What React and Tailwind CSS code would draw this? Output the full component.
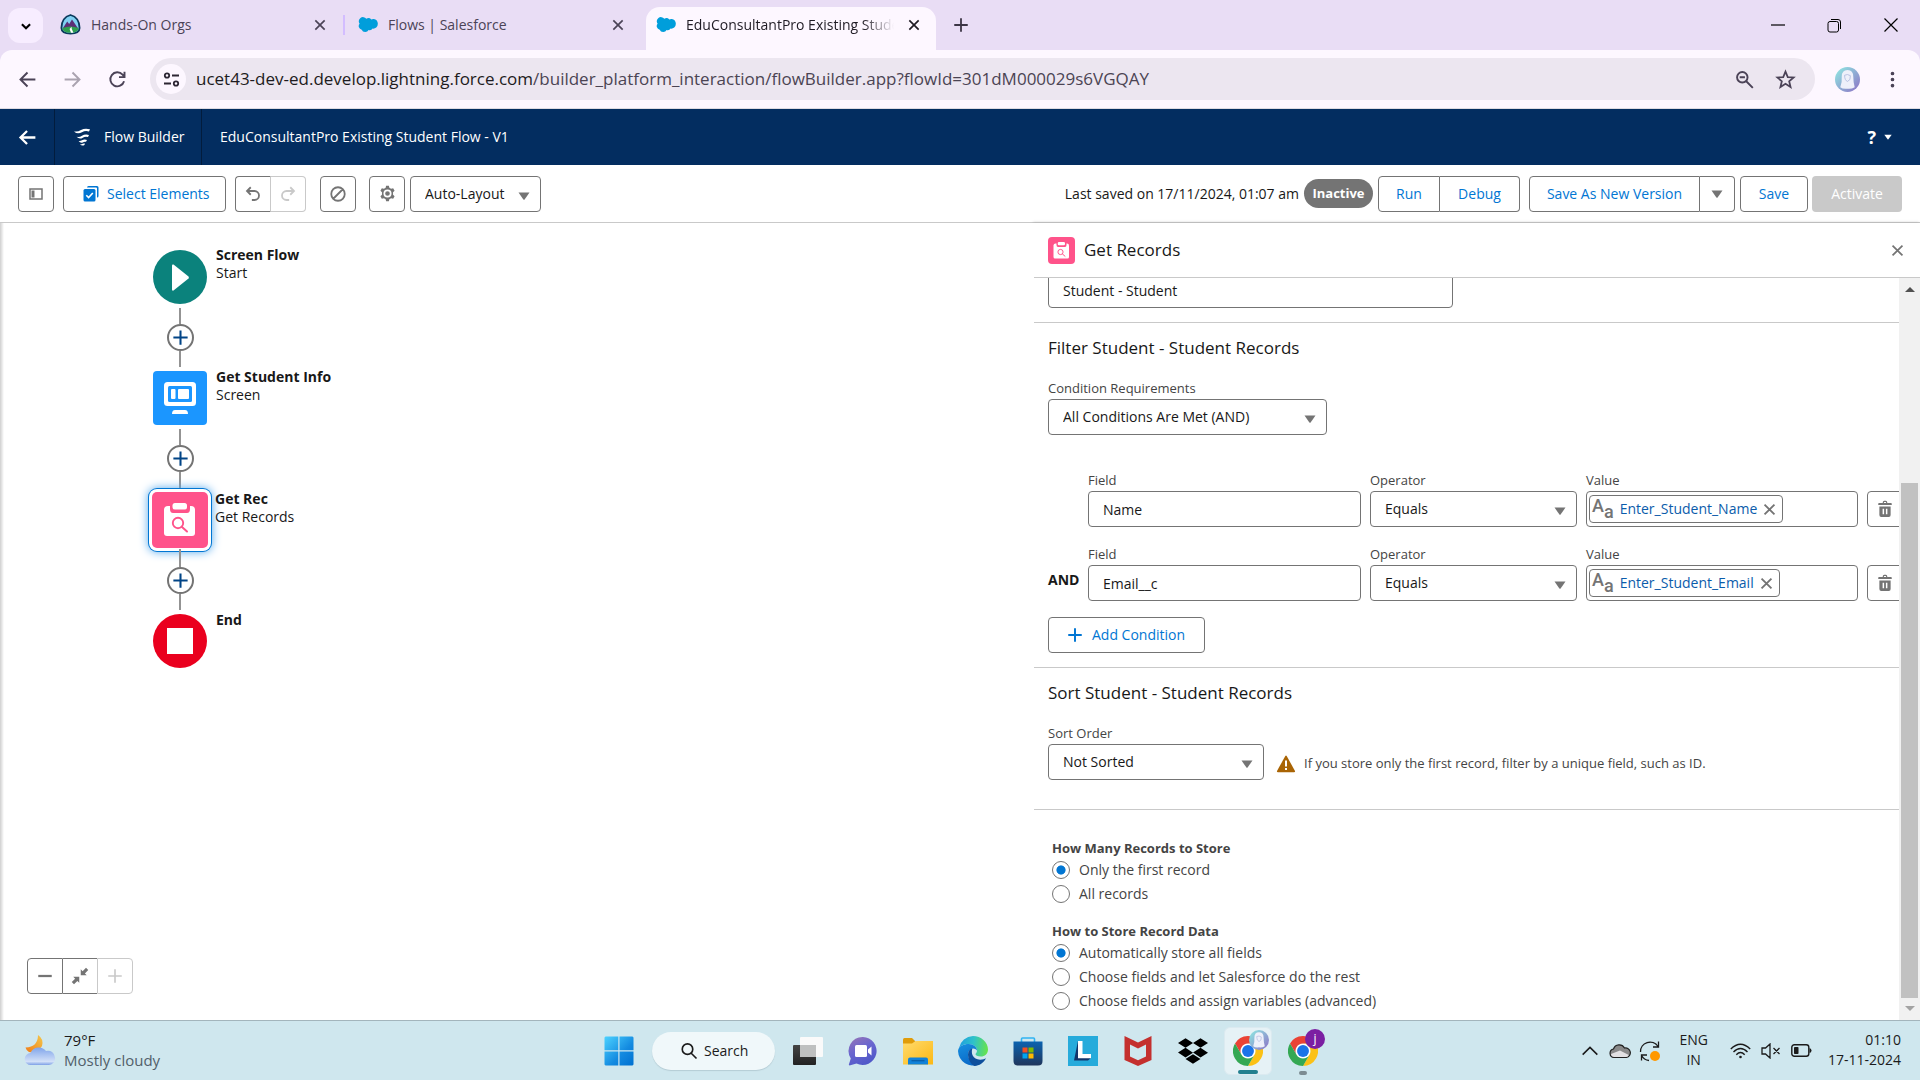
import React from "react";
import { FaDropbox } from "react-icons/fa";

const font = "font-['Open_Sans','Noto_Sans',sans-serif]";

/* ---------- small drawings ---------- */

const Line = ({ d, size = 20, w = 2, className = "", vb = 24 }) => (
  <svg width={size} height={size} viewBox={`0 0 ${vb} ${vb}`} fill="none" stroke="currentColor" strokeWidth={w} className={`shrink-0 ${className}`} aria-hidden="true">
    <path d={d} />
  </svg>
);

const Solid = ({ d, size = 20, className = "", vb = 24 }) => (
  <svg width={size} height={size} viewBox={`0 0 ${vb} ${vb}`} fill="currentColor" className={`shrink-0 ${className}`} aria-hidden="true">
    <path fillRule="evenodd" d={d} />
  </svg>
);

const X = "M5 5 L19 19 M19 5 L5 19";
const PLUS = "M12 3 V21 M3 12 H21";
const Caret = ({ className = "", size = 12 }) => <Solid vb={12} size={size} d="M0.5 2.5 H11.5 L6.6 9.4 Q6 10.1 5.4 9.4 Z" className={className} />;

const Cloud = () => (
  <svg width="20" height="16" viewBox="0 0 20 16" className="shrink-0" aria-hidden="true">
    <path fill="#009edb" d="M8.3 1.8 A3.7 3.7 0 0 1 13.3 2.4 A4.6 4.6 0 0 1 19.8 7 A4.6 4.6 0 0 1 14.6 11.6 A3.4 3.4 0 0 1 10.6 13 A3.8 3.8 0 0 1 3.7 12.7 A3.6 3.6 0 0 1 1.6 6.8 A4.1 4.1 0 0 1 8.3 1.8 Z" />
  </svg>
);

const Trailhead = () => (
  <svg width="21" height="21" viewBox="0 0 21 21" className="shrink-0" aria-hidden="true">
    <path d="M10.5 1 C16 2.5 19.5 7 19.6 14 Q19.5 19.5 10.5 19.7 Q1.5 19.5 1.4 14 C1.5 7 5 2.5 10.5 1 Z" fill="#7fd0f2" stroke="#0b3a5c" strokeWidth="1.8" />
    <path d="M3 14 L7.2 7.5 L9.2 10 L12 5.5 L17.8 14 Z" fill="#5b2f77" />
    <path d="M2.4 14 Q10.5 11 18.6 14 Q18.5 18.6 10.5 18.8 Q2.5 18.6 2.4 14 Z" fill="#2e9e4f" />
    <path d="M11.5 12.8 L9.6 15 L11 18.7 H13.4 L11.8 15 Z" fill="#fff" />
  </svg>
);

const FlowMark = () => (
  <svg width="18" height="18" viewBox="0 0 18 18" fill="#fff" className="shrink-0" aria-hidden="true">
    <path d="M1 3.4 Q4.5 4.2 8 2 Q12 -0.2 17 1.3 L16 3.4 Q12 2.4 9 4.2 Q4.5 6.8 1 3.4 Z" />
    <path d="M3.6 8.8 Q6.5 9.4 9 7.7 Q12 5.8 16 6.9 L15 9 Q12 8.200 9.800 9.700 Q6.400 11.900 3.6 8.8 Z" />
    <path d="M5.6 13 Q7.4 13.4 9 12.300 Q11 11.100 14 11.900 L13 13.800 Q11.200 13.400 9.800 14.400 Q7.600 15.700 5.6 13 Z" />
    <path d="M7 16.200 Q8.600 16.400 9.600 15.700 Q10.600 15.200 12 15.500 L11.400 17 Q9 18.400 7 16.200 Z" />
  </svg>
);

const Clipboard = ({ size }) => (
  <svg width={size} height={size} viewBox="0 0 54 54" className="block" aria-hidden="true">
    <path d="M15 13 H38 Q42 13 42 17 V40 Q42 43 39 43 H14 Q11 43 11 40 V17 Q11 13 15 13 Z" fill="#fff" />
    <path d="M17 10 H37 V16 Q37 20 34 20 H20 Q17 20 17 16 Z" fill="#ff538a" />
    <rect x="19.5" y="10" width="14.500" height="6.500" rx="2.500" fill="#fff" />
    <circle cx="25" cy="30" r="5.200" fill="none" stroke="#ff538a" strokeWidth="1.900" />
    <path d="M29 34 L34 38.500" stroke="#ff538a" strokeWidth="2" strokeLinecap="round" />
  </svg>
);

const Monitor = () => (
  <svg width="54" height="54" viewBox="0 0 54 54" className="block" aria-hidden="true">
    <rect x="11" y="11" width="32" height="24" rx="3.500" fill="#fff" />
    <rect x="15" y="15" width="24" height="16" rx="1.500" fill="#1b96ff" />
    <rect x="18" y="18" width="4.500" height="10" rx="1" fill="#fff" />
    <rect x="25" y="18" width="11" height="10" rx="1" fill="#fff" />
    <path d="M19 43 Q19 39 22 39 H32 Q35 39 35 43 Z" fill="#fff" />
  </svg>
);

const Chrome = () => (
  <svg width="30" height="30" viewBox="0 0 48 48" className="block" aria-hidden="true">
    <circle cx="24" cy="24" r="12" fill="#fff" />
    <path fill="#ea4335" d="M24,12H44.78a23.99,23.99,0,0,0-41.56,0L13.61,30A11.99,11.99,0,0,1,24,12Z" />
    <path fill="#fbc116" d="M34.39,30,24,48A23.99,23.99,0,0,0,44.78,12H24A11.99,11.99,0,0,1,34.39,30Z" />
    <path fill="#34a853" d="M13.61,30,3.22,12A23.99,23.99,0,0,0,24,48L34.39,30a11.99,11.99,0,0,1-20.78,0Z" />
    <circle cx="24" cy="24" r="9.500" fill="#1a73e8" />
  </svg>
);

const Avatar = ({ size }) => (
  <svg width={size} height={size} viewBox="0 0 26 26" className="block shrink-0" aria-hidden="true">
    <defs>
      <linearGradient id="av" x1="0" y1="0" x2="1" y2="1">
        <stop offset="0.1" stopColor="#8fe0e0" />
        <stop offset="0.9" stopColor="#8d7cc8" />
      </linearGradient>
    </defs>
    <circle cx="13" cy="13" r="13" fill="url(#av)" />
    <path d="M13 3 Q19 3 19 10 Q19 16 20.500 21 Q17 23 13 22.500 Q8 23 5.500 21 Q7.500 16 7 10 Q7 3 13 3 Z" fill="#eef0fa" />
    <path d="M10 8.500 Q13 7 16 9 Q16.500 14 13 15 Q10 14 10 8.500 Z" fill="none" stroke="#a9b4dc" strokeWidth="0.800" />
  </svg>
);

const Edge = () => (
  <svg width="30" height="30" viewBox="0 0 30 30" className="block" aria-hidden="true">
    <defs>
      <linearGradient id="e1" x1="0" y1="0.3" x2="1" y2="0.4">
        <stop offset="0" stopColor="#1e9fe0" />
        <stop offset="0.5" stopColor="#2fc2c9" />
        <stop offset="1" stopColor="#66e34c" />
      </linearGradient>
      <linearGradient id="e2" x1="0" y1="0" x2="0.4" y2="1">
        <stop offset="0" stopColor="#1790e0" />
        <stop offset="1" stopColor="#0a6ac8" />
      </linearGradient>
    </defs>
    <path d="M1 12 A15 15 0 0 1 15 0 C23 0 30 6 30 13.500 C30 18 26.500 20.500 23 20.500 C19.500 20.500 17.500 19.500 17.500 18.300 C17.500 17.300 19 17 19 14.600 C19 11 15.500 8 10.800 8 C6.500 8 3 9.500 1 12 Z" fill="url(#e1)" />
    <path d="M0 15 C0.500 10 5.500 8 10.800 8 C15.500 8 19 11 19 14.600 C16.500 10.500 10 12.500 10 18.500 C10 24.500 16 29 21 28.200 A15 15 0 0 1 0 15 Z" fill="url(#e2)" />
    <path d="M10 18.500 C10 15 12 13 14.500 12.300 C12.500 17 15 24 22.500 23.700 C25 23.600 26.500 22.700 28 22.200 C26 26.500 21 30 16.500 29.900 C13 28.500 10 23.500 10 18.500 Z" fill="#0e4f9c" />
  </svg>
);

const WinLogo = () => (
  <svg width="30" height="30" viewBox="0 0 30 30" className="block" aria-hidden="true">
    <defs>
      <linearGradient id="wl" x1="0" y1="0" x2="1" y2="1">
        <stop offset="0" stopColor="#4cd2ff" />
        <stop offset="0.6" stopColor="#138ae0" />
        <stop offset="1" stopColor="#0070d0" />
      </linearGradient>
    </defs>
    <path fill="url(#wl)" d="M1.500 0.500 H14.300 V14.300 H0.500 V1.500 Z M15.500 0.500 H28.500 L29.500 1.500 V14.300 H15.500 Z M0.500 15.500 H14.300 V29.500 H1.500 L0.500 28.500 Z M15.500 15.500 H29.500 V28.500 L28.500 29.500 H15.500 Z" />
  </svg>
);

const TaskView = () => (
  <svg width="30" height="30" viewBox="0 0 30 30" className="block" aria-hidden="true">
    <defs>
      <linearGradient id="tv" x1="0" y1="0" x2="0" y2="1">
        <stop offset="0" stopColor="#444" />
        <stop offset="1" stopColor="#222" />
      </linearGradient>
    </defs>
    <rect x="0" y="9" width="23" height="20" rx="1" fill="url(#tv)" />
    <rect x="7" y="1" width="23" height="20" rx="1" fill="#fafafa" />
    <rect x="7" y="9" width="16" height="12" fill="#bfc0c0" />
  </svg>
);

const Chat = () => (
  <svg width="30" height="30" viewBox="0 0 30 30" className="block" aria-hidden="true">
    <defs>
      <linearGradient id="ch" x1="0" y1="0" x2="0.5" y2="1">
        <stop offset="0" stopColor="#9a76b4" />
        <stop offset="0.5" stopColor="#6a66cf" />
        <stop offset="1" stopColor="#5059c9" />
      </linearGradient>
    </defs>
    <path d="M15 1 A14 14 0 1 1 8.500 27.600 L1.500 29.500 Q0.500 29 1 28 L2.800 22.500 A14 14 0 0 1 15 1 Z" fill="url(#ch)" />
    <rect x="7" y="9" width="12" height="12" rx="1.500" fill="#fff" />
    <path d="M20 13.500 L23.500 10.500 V19.500 L20 16.500 Z" fill="#fff" />
  </svg>
);

const Folder = () => (
  <svg width="30" height="30" viewBox="0 0 30 30" className="block" aria-hidden="true">
    <defs>
      <linearGradient id="fo" x1="0" y1="0" x2="1" y2="1">
        <stop offset="0" stopColor="#ffdb6e" />
        <stop offset="1" stopColor="#fcb813" />
      </linearGradient>
    </defs>
    <path d="M0 3.500 Q0 2 1.500 2 H9 L12 5 V12 H0 Z" fill="#e09c0a" />
    <path d="M0 7.500 H9 L12.500 5 H30 V28.500 H0 Z" fill="url(#fo)" />
    <path d="M5 28.500 V23.500 Q5 21.500 7 21.500 H23 Q25 21.500 25 23.500 V28.500 Z" fill="#1182d8" />
    <path d="M8.500 24.700 H21.500" stroke="#0b5ea8" strokeWidth="1.300" />
  </svg>
);

const Store = () => (
  <svg width="30" height="30" viewBox="0 0 30 30" className="block" aria-hidden="true">
    <defs>
      <linearGradient id="st" x1="0" y1="0" x2="0" y2="1">
        <stop offset="0" stopColor="#0b63b0" />
        <stop offset="1" stopColor="#20365c" />
      </linearGradient>
    </defs>
    <path d="M8.500 7 V3 Q8.500 2 9.500 2 H20.500 Q21.500 2 21.500 3 V7" fill="none" stroke="#30b4f2" strokeWidth="1.600" />
    <path d="M0.500 5.500 H29.500 V25 Q29.500 29.500 25 29.500 H5 Q0.500 29.500 0.500 25 Z" fill="url(#st)" />
    <rect x="9.500" y="11.500" width="5" height="5" fill="#f25022" />
    <rect x="15.500" y="11.500" width="5" height="5" fill="#7fba00" />
    <rect x="9.500" y="17.500" width="5" height="5" fill="#00a4ef" />
    <rect x="15.500" y="17.500" width="5" height="5" fill="#ffb900" />
  </svg>
);

const BlueL = () => (
  <svg width="30" height="30" viewBox="0 0 30 30" className="block" aria-hidden="true">
    <rect width="30" height="30" fill="#26abdb" />
    <path d="M10 5 L6 24.500 H20 L23 22 H11 Z" fill="#12356b" />
    <path d="M10 5 H14.500 V18 H23 V22.200 H10 Z" fill="#fff" />
  </svg>
);

const Shield = () => (
  <svg width="30" height="30" viewBox="0 0 30 30" className="block" aria-hidden="true">
    <path d="M1.500 0 L15 6.500 L28.500 0 V24 L15 30 L1.500 24 Z M7 8.500 V20.500 L15 24.200 L23 20.500 V8.500 L15 12.500 Z" fill="#c4302e" fillRule="evenodd" />
  </svg>
);

const Weather = () => (
  <svg width="32" height="38" viewBox="0 0 32 38" className="block shrink-0" aria-hidden="true">
    <defs>
      <linearGradient id="mo" x1="1" y1="0" x2="0" y2="1">
        <stop offset="0" stopColor="#f4c84a" />
        <stop offset="1" stopColor="#f07c18" />
      </linearGradient>
      <linearGradient id="cl" x1="0" y1="0" x2="0" y2="1">
        <stop offset="0" stopColor="#7fa4ea" />
        <stop offset="0.8" stopColor="#d2e0f8" />
        <stop offset="1" stopColor="#7d9fe6" />
      </linearGradient>
    </defs>
    <path d="M14 3 Q20 7 18 14 Q13 22 5 20 Q2 18 1.500 15.500 Q14 15 14 3 Z" fill="url(#mo)" />
    <path d="M7 33 A6 6 0 0 1 6.500 21 A9 9 0 0 1 22 19 A7 7 0 0 1 31 25.500 A6.500 6.500 0 0 1 25 33 Z" fill="url(#cl)" />
  </svg>
);

/* ---------- building blocks ---------- */

const boxBtn = "flex items-center justify-center border border-[#747474] bg-white text-[#747474] h-9";

function Select({ id, label, options, className = "" }) {
  return (
    <div className={`relative ${className}`}>
      <select id={id} aria-label={label} className="h-9 w-full appearance-none rounded-[4px] border border-[#747474] bg-white pr-8 pl-3.5 text-sm text-[#181818]">
        {options.map((o) => (
          <option key={o}>{o}</option>
        ))}
      </select>
      <Caret className="pointer-events-none absolute top-3.5 right-[11px] text-[#747474]" />
    </div>
  );
}

function Tab({ icon, title, active }) {
  return (
    <div className={`flex h-full items-center gap-2.5 pr-3 pl-2.5 ${active ? "w-[290px] text-[#1f1b24]" : "w-[292px] text-[#4b4357]"}`}>
      {icon}
      <span className={`flex-1 overflow-hidden text-sm whitespace-nowrap ${active ? "[mask-image:linear-gradient(to_right,black_85%,transparent)]" : ""}`}>{title}</span>
      <button aria-label={`Close ${title}`} className="p-0.5">
        <Line d={X} size={16} w={2.5} />
      </button>
    </div>
  );
}

const NODES = [
  { title: "Screen Flow", sub: "Start", kind: "start" },
  { title: "Get Student Info", sub: "Screen", kind: "screen" },
  { title: "Get Rec", sub: "Get Records", kind: "records" },
  { title: "End", sub: "", kind: "end" },
];

function NodeIcon({ kind }) {
  if (kind === "start")
    return (
      <button aria-label="Start" className="flex size-[54px] items-center justify-center rounded-full bg-[#0b827c]">
        <svg width="17" height="27" viewBox="0 0 17 27" aria-hidden="true">
          <path d="M0 1.500 Q0 0 1.500 0.500 L16.500 12.500 Q17.200 13.500 16.500 14.500 L1.500 26.500 Q0 27 0 25.500 Z" fill="#fff" />
        </svg>
      </button>
    );
  if (kind === "screen")
    return (
      <button aria-label="Screen" className="size-[54px] rounded-[4px] bg-[#1b96ff]">
        <Monitor />
      </button>
    );
  if (kind === "records")
    return (
      <button aria-label="Get Records" className="-m-px size-14 rounded-[5px] bg-[#ff538a] p-px shadow-[0_0_0_3px_#fff,0_0_0_4px_#0176d3,0_0_10px_4px_#57a9ec]">
        <Clipboard size={54} />
      </button>
    );
  return (
    <button aria-label="End" className="flex size-[54px] items-center justify-center rounded-full bg-[#ea001e]">
      <span className="size-[26px] bg-white" />
    </button>
  );
}

function Canvas() {
  return (
    <section aria-label="Flow canvas" className="relative flex flex-col justify-between bg-[linear-gradient(to_right,#cfcfcf,#fff_4px)]">
      <ol className="pt-[27px] pl-[153px]">
        {NODES.map((n, i) => (
          <li key={n.title}>
            <div className="flex h-[54px] items-start gap-[9px]">
              <NodeIcon kind={n.kind} />
              <div className={`text-sm leading-[18px] text-[#181818] ${i ? "-mt-[3px]" : "-mt-1"} ${n.kind === "records" ? "-ml-px" : ""}`}>
                <p className="font-bold">{n.title}</p>
                <p>{n.sub}</p>
              </div>
            </div>
            {i < NODES.length - 1 && (
              <div className={`flex w-[54px] flex-col items-center ${n.kind === "records" ? "pt-0.5 pb-1" : n.kind === "screen" ? "pt-1 pb-0.5" : "py-1"}`}>
                <span className={`w-0.5 bg-[#939393] ${n.kind === "records" ? "h-[18px]" : "h-4"}`} />
                <button aria-label="Add element" className="flex size-[27px] items-center justify-center rounded-full border-2 border-[#747474] bg-white text-[#014486]">
                  <Line d={PLUS} size={19} w={2.6} />
                </button>
                <span className={`w-0.5 bg-[#939393] ${n.kind === "screen" ? "h-[19px]" : "h-4"}`} />
              </div>
            )}
          </li>
        ))}
      </ol>
      <div className="flex pb-[26px] pl-[27px]">
        <button aria-label="Zoom out" className={`${boxBtn} w-9 rounded-l-[4px]`}>
          <Line d="M3 12 H21" size={18} w={3} />
        </button>
        <button aria-label="Zoom to fit" className={`${boxBtn} w-[34px] border-x-0`}>
          <Solid size={18} d="M13 3 L15.500 5.500 L20 1 L23 4 L18.500 8.500 L21 11 H13 Z M3 13 H11 V21 L8.500 18.500 L4 23 L1 20 L5.500 15.500 Z" />
        </button>
        <button aria-label="Zoom in" disabled className="flex h-9 w-9 items-center justify-center rounded-r-[4px] border border-[#c9c9c9] text-[#c9c9c9]">
          <Line d={PLUS} size={18} w={2.2} />
        </button>
      </div>
    </section>
  );
}

function Condition({ n, field, value, joined }) {
  const label = "block text-[13px] leading-[19px] text-[#444]";
  return (
    <div className="-mr-1 flex items-end">
      <span className="w-10 shrink-0 self-end pb-3 text-sm leading-[18px] font-bold">{joined ? "AND" : ""}</span>
      <div className="grid flex-1 grid-cols-[273fr_207fr_272fr_36px] items-end gap-[9px]">
        <div>
          <label htmlFor={`field${n}`} className={label}>Field</label>
          <input id={`field${n}`} defaultValue={field} className="mt-px block h-9 w-full rounded-[4px] border border-[#747474] px-3.5 text-sm text-[#181818]" />
        </div>
        <div>
          <label htmlFor={`op${n}`} className={label}>Operator</label>
          <Select id={`op${n}`} options={["Equals"]} className="mt-px" />
        </div>
        <div>
          <span className={label}>Value</span>
          <div className="mt-px flex h-9 items-center rounded-[4px] border border-[#747474] px-0.5">
            <div className="flex h-7 items-center rounded-[4px] border border-[#747474] pr-1 pl-0.5">
              <span aria-hidden="true" className="flex items-start font-['Roboto',sans-serif] font-medium text-[#747474]">
                <span className="text-lg leading-4">A</span>
                <span className="pt-1.5 text-lg leading-4">a</span>
              </span>
              <a href="#value" className="ml-1.5 text-sm text-[#0b5cab]">{value}</a>
              <button aria-label={`Remove ${value}`} className="ml-1 text-[#747474]">
                <Line d={X} size={17} w={2.6} />
              </button>
            </div>
          </div>
        </div>
        <button aria-label="Delete condition" className={`${boxBtn} w-9 rounded-[4px]`}>
          <Solid size={18} d="M9 3 Q9 1 11 1 H13 Q15 1 15 3 V4 H20 Q21 4 21 5 V6.500 H3 V5 Q3 4 4 4 H9 Z M10.600 4 H13.400 V2.600 H10.600 Z M4.500 8.500 H19.500 V20 Q19.500 22.500 17 22.500 H7 Q4.500 22.500 4.500 20 Z M8.800 11.500 V19 H10.800 V11.500 Z M13.200 11.500 V19 H15.200 V11.500 Z" />
        </button>
      </div>
    </div>
  );
}

function Radios({ legend, name, options, className }) {
  return (
    <fieldset className={className}>
      <legend className="mb-px text-[13px] leading-[18px] font-bold text-[#444]">{legend}</legend>
      {options.map((o, i) => (
        <label key={o} className="flex h-6 items-center gap-[9px] text-sm leading-6 text-[#444]">
          <input type="radio" name={name} defaultChecked={i === 0} className="size-[18px] appearance-none rounded-full border border-[#747474] bg-white checked:bg-[radial-gradient(circle_closest-side,#0176d3_52%,transparent_62%)]" />
          {o}
        </label>
      ))}
    </fieldset>
  );
}

function Panel() {
  return (
    <aside className="flex min-h-0 flex-col bg-white shadow-[-1px_0_3px_#aaa]">
      <header className="flex h-[55px] shrink-0 items-center border-b border-[#c9c9c9] pr-3.5 pl-3.5">
        <span className="size-[27px] rounded-[4px] bg-[#ff538a]">
          <Clipboard size={27} />
        </span>
        <h2 className="ml-[9px] flex-1 text-[17px] text-[#181818]">Get Records</h2>
        <button aria-label="Close panel" className="text-[#747474]">
          <Line d={X} size={17} w={2.4} />
        </button>
      </header>
      <div className="flex min-h-0 flex-1">
        <div className="min-w-0 flex-1 overflow-hidden text-[#181818]">
          <div className="border-b border-[#c9c9c9] px-3.5 pb-[14px]">
            <input aria-label="Object" defaultValue="Student - Student" className="-mt-1.5 block h-9 w-[405px] rounded-[4px] border border-[#747474] px-3.5 text-sm text-[#181818]" />
          </div>
          <section className="border-b border-[#c9c9c9] pb-[14px] pl-3.5">
            <h3 className="pt-3 text-[17px] leading-[26px]">Filter Student - Student Records</h3>
            <label htmlFor="req" className="mt-[18px] block text-[13px] leading-[19px] text-[#444]">Condition Requirements</label>
            <Select id="req" options={["All Conditions Are Met (AND)"]} className="mt-px w-[279px]" />
            <div className="mt-9 flex flex-col gap-[18px]">
              <Condition n={1} field="Name" value="Enter_Student_Name" />
              <Condition n={2} field="Email__c" value="Enter_Student_Email" joined />
            </div>
            <button className="mt-4 flex h-9 w-[157px] items-center gap-2 rounded-[4px] border border-[#747474] pl-[17px] text-sm text-[#0176d3]">
              <Line d={PLUS} size={18} w={2.6} />
              Add Condition
            </button>
          </section>
          <section className="border-b border-[#c9c9c9] pb-[29px] pl-3.5">
            <h3 className="pt-3 text-[17px] leading-[26px]">Sort Student - Student Records</h3>
            <label htmlFor="sort" className="mt-[18px] block text-[13px] leading-[19px] text-[#444]">Sort Order</label>
            <div className="mt-px flex items-center">
              <Select id="sort" options={["Not Sorted"]} className="w-[216px]" />
              <div className="flex items-center gap-2 pt-1 pl-3">
                <svg width="20" height="18" viewBox="0 0 20 18" className="shrink-0" aria-hidden="true">
                  <path d="M9.300 1 Q10 0 10.700 1 L19 16 Q19.400 17.200 18 17.200 H2 Q0.600 17.200 1 16 Z" fill="#a96404" />
                  <path d="M10 5.500 V11.500 M10 13 V15" stroke="#fff" strokeWidth="2" />
                </svg>
                <p className="text-[13px] text-[#444]">If you store only the first record, filter by a unique field, such as ID.</p>
              </div>
            </div>
          </section>
          <Radios legend="How Many Records to Store" name="count" options={["Only the first record", "All records"]} className="mt-[29px] ml-[18px]" />
          <Radios legend="How to Store Record Data" name="store" options={["Automatically store all fields", "Choose fields and let Salesforce do the rest", "Choose fields and assign variables (advanced)"]} className="mt-4 ml-[18px]" />
        </div>
        <div className="flex w-[21px] shrink-0 flex-col items-center bg-[#f1f1f1] py-1.5" aria-hidden="true">
          <Solid vb={10} size={10} d="M0 8 L5 3 L10 8 Z" className="text-[#505050]" />
          <span className="grow-[190]" />
          <span className="w-[17px] grow-[516] bg-[#c1c1c1]" />
          <Solid vb={10} size={10} d="M0 2 L5 7 L10 2 Z" className="mt-1.5 text-[#a3a3a3]" />
        </div>
      </div>
    </aside>
  );
}

function BrowserBar() {
  return (
    <header>
      <div className="flex h-[50px] bg-[#e9ddf5]">
        <button aria-label="Search tabs" className="mt-2 ml-2 flex size-[35px] items-center justify-center rounded-xl bg-[#f7edff]">
          <Line d="M5 9 L12 16 L19 9" size={14} w={3.6} />
        </button>
        <div className="flex pt-[7px]">
          <div className="pb-2 pl-[7px]">
            <Tab icon={<Trailhead />} title="Hands-On Orgs" />
          </div>
          <div className="mt-2 ml-px h-5 w-0.5 bg-[#d3bdff]" />
          <div className="pb-2 pl-[3px]">
            <Tab icon={<Cloud />} title="Flows | Salesforce" />
          </div>
          <div className="ml-1.5 rounded-t-[14px] bg-[#fdf7ff] pb-2">
            <Tab icon={<Cloud />} title="EduConsultantPro Existing Student Flow - V1" active />
          </div>
          <button aria-label="New tab" className="ml-4 self-center pb-2 text-[#3c3545]">
            <Line d={PLUS} size={18} w={2.4} />
          </button>
        </div>
        <div className="ml-auto flex items-center gap-[42px] pr-[22px] text-black">
          <button aria-label="Minimise">
            <Line vb={14} size={14} w={1.2} d="M0 7 H14" />
          </button>
          <button aria-label="Restore">
            <svg width="15" height="15" viewBox="0 0 15 15" fill="none" stroke="currentColor" aria-hidden="true">
              <rect x="1" y="3.500" width="10.500" height="10.500" rx="2" />
              <path d="M4 1.500 H11 Q13.500 1.500 13.500 4 V11" />
            </svg>
          </button>
          <button aria-label="Close window">
            <Line vb={14} size={14} w={1.2} d="M0.500 0.500 L13.500 13.500 M13.500 0.500 L0.500 13.500" />
          </button>
        </div>
      </div>
      <div className="bg-[#e9ddf5]">
        <div className="flex h-[59px] items-center rounded-t-xl border-b border-[#dedbe2] bg-[#fdf7ff] px-[17px] text-[#4b4357]">
          <button aria-label="Back">
            <Line d="M21 12 H4 M12 4 L4 12 L12 20" size={21} w={2.2} />
          </button>
          <button aria-label="Forward" className="ml-6 text-[#aaa3b0]">
            <Line d="M3 12 H20 M12 4 L20 12 L12 20" size={21} w={2.2} />
          </button>
          <button aria-label="Reload" className="ml-6">
            <Line d="M19.500 14 A8 8 0 1 1 17.800 6.500 L20 9 M20 3 V9.300 H13.700" size={21} w={2.2} />
          </button>
          <div className="ml-[22px] flex h-[42px] flex-1 items-center rounded-full bg-[#ece6f0] pr-[19px] pl-1.5">
            <button aria-label="Site information" className="flex size-[30px] items-center justify-center rounded-full bg-[#fdf7ff]">
              <svg width="17" height="17" viewBox="0 0 17 17" fill="none" stroke="#2c2633" strokeWidth="1.800" aria-hidden="true">
                <circle cx="4" cy="4.500" r="2.200" />
                <path d="M9 4.500 H16 M1 12.500 H8" />
                <circle cx="13" cy="12.500" r="2.200" />
              </svg>
            </button>
            <p className="ml-2.5 flex-1 text-[17px] text-[#4b4453]">
              <span className="text-[#1d1b20]">ucet43-dev-ed.develop.lightning.force.com</span>/builder_platform_interaction/flowBuilder.app?flowId=301dM000029s6VGQAY
            </p>
            <button aria-label="Zoom">
              <Line d="M9.500 3.500 A6 6 0 1 0 9.500 15.500 A6 6 0 1 0 9.500 3.500 M14 14 L21.500 21.500 M6.500 9.500 H12.500" size={21} w={2.2} />
            </button>
            <button aria-label="Bookmark" className="ml-5">
              <Line d="M12 3 L14.600 9.200 L21.300 9.700 L16.200 14 L17.800 20.600 L12 17 L6.200 20.600 L7.800 14 L2.700 9.700 L9.400 9.200 Z" size={21} w={2} />
            </button>
          </div>
          <button aria-label="Profile" className="ml-5">
            <Avatar size={25} />
          </button>
          <button aria-label="Menu" className="ml-[22px]">
            <Solid size={21} d="M12 3 A2.100 2.100 0 1 1 12 7.200 A2.100 2.100 0 1 1 12 3 M12 9.900 A2.100 2.100 0 1 1 12 14.100 A2.100 2.100 0 1 1 12 9.900 M12 16.800 A2.100 2.100 0 1 1 12 21 A2.100 2.100 0 1 1 12 16.800" />
          </button>
        </div>
      </div>
    </header>
  );
}

function BuilderHeader() {
  return (
    <nav className="flex h-14 shrink-0 items-center bg-[#032d60] text-sm text-white">
      <button aria-label="Back to flows" className="flex h-full w-[55px] items-center justify-center border-r border-[#021c3d]">
        <Line d="M21 12 H4 M11.500 4.500 L4 12 L11.500 19.500" size={21} w={2.6} />
      </button>
      <div className="flex h-full w-[147px] items-center gap-[13px] border-r border-[#021c3d] pl-[18px]">
        <FlowMark />
        Flow Builder
      </div>
      <h1 className="flex-1 pl-[18px]">EduConsultantPro Existing Student Flow - V1</h1>
      <button aria-label="Help" className="flex items-center gap-2 pr-7 text-lg font-bold">
        ?
        <Caret size={8} />
      </button>
    </nav>
  );
}

function Toolbar() {
  const txt = "h-9 border border-[#747474] text-sm text-[#0176d3] bg-white";
  return (
    <div className="flex h-[58px] shrink-0 items-center border-b border-[#c9c9c9] bg-white pr-[18px] pl-[18px]">
      <button aria-label="Toggle toolbox" className={`${boxBtn} w-9 rounded-[4px]`}>
        <svg width="14" height="12" viewBox="0 0 14 12" aria-hidden="true">
          <path d="M1 1 H13 V11 H1 Z" fill="none" stroke="#747474" strokeWidth="1.500" />
          <path d="M2.500 2.500 H5.500 V9.500 H2.500 Z" fill="#747474" />
        </svg>
      </button>
      <button className={`${txt} ml-[9px] flex w-[163px] items-center gap-2 rounded-[4px] pl-[19px]`}>
        <svg width="16" height="16" viewBox="0 0 16 16" className="shrink-0" aria-hidden="true">
          <path d="M4 1.500 Q4 0 5.500 0 H14 Q15.500 0 15.500 1.500 V10 Q15.500 11.500 14 11.500 V2.500 Q14 1.500 13 1.500 Z" fill="#0176d3" />
          <rect x="0.500" y="3" width="12" height="12.500" rx="1.500" fill="#0176d3" />
          <path d="M3.300 9.300 L5.600 11.600 L9.800 7" fill="none" stroke="#fff" strokeWidth="1.600" />
        </svg>
        Select Elements
      </button>
      <button aria-label="Undo" className={`${boxBtn} ml-[9px] w-9 rounded-l-[4px] border-r-[#c9c9c9]`}>
        <Line d="M9 3 L4 8 L9 13 M4.500 8 H14 A6 6 0 0 1 14 20 H10.500" size={18} w={2.4} />
      </button>
      <button aria-label="Redo" disabled className="flex h-9 w-[35px] items-center justify-center rounded-r-[4px] border border-l-0 border-[#c9c9c9] text-[#c9c9c9]">
        <Line d="M15 3 L20 8 L15 13 M19.500 8 H10 A6 6 0 0 0 10 20 H13.500" size={18} w={2.4} />
      </button>
      <button aria-label="Cut elements" className={`${boxBtn} ml-3.5 w-9 rounded-[4px]`}>
        <Line d="M12 3 A9 9 0 1 0 12 21 A9 9 0 1 0 12 3 M18 6 L6 18" size={18} w={2.4} />
      </button>
      <button aria-label="Settings" className={`${boxBtn} ml-[13px] w-9 rounded-[4px]`}>
        <Solid size={17} d="M10 1 H14 L14.600 4 L17 5.400 L20 4.500 L22 8 L19.800 10.200 V13.800 L22 16 L20 19.500 L17 18.600 L14.600 20 L14 23 H10 L9.400 20 L7 18.600 L4 19.500 L2 16 L4.200 13.800 V10.200 L2 8 L4 4.500 L7 5.400 L9.400 4 Z M12 6.300 A5.700 5.700 0 1 0 12 17.700 A5.700 5.700 0 1 0 12 6.300 M12 8.700 A3.300 3.300 0 1 1 12 15.300 A3.300 3.300 0 1 1 12 8.700" />
      </button>
      <Select label="Layout" options={["Auto-Layout"]} className="ml-[5px] w-[131px]" />
      <p className="ml-auto text-sm text-[#181818]">Last saved on 17/11/2024, 01:07 am</p>
      <span className="ml-[5px] flex h-[29px] w-[69px] items-center justify-center rounded-full bg-[#747474] text-[13px] font-bold text-white">Inactive</span>
      <button className={`${txt} ml-[5px] w-[62px] rounded-l-[4px]`}>Run</button>
      <button className={`${txt} w-20 rounded-r-[4px] border-l-0`}>Debug</button>
      <button className={`${txt} ml-[9px] w-[171px] rounded-l-[4px]`}>Save As New Version</button>
      <button aria-label="More save options" className={`${boxBtn} w-[35px] rounded-r-[4px] border-l-0`}>
        <Caret />
      </button>
      <button className={`${txt} ml-[5px] w-[68px] rounded-[4px]`}>Save</button>
      <button disabled className="ml-1 h-9 w-[90px] rounded-[4px] bg-[#c9c9c9] text-sm text-white">Activate</button>
    </div>
  );
}

const APPS = [
  ["Task view", TaskView],
  ["Chat", Chat],
  ["File Explorer", Folder],
  ["Edge", Edge],
  ["Store", Store],
  ["Lenovo Vantage", BlueL],
  ["McAfee", Shield],
];

function Taskbar() {
  return (
    <footer className="grid h-[60px] shrink-0 grid-cols-[1fr_auto_1fr] items-center border-t border-[#a3b5bc] bg-[#cfe7ee] text-[#1b1b1b]">
      <div className="flex items-center gap-2 pl-6">
        <Weather />
        <div className="pb-px text-[15px] leading-5">
          <p>79°F</p>
          <p className="text-[#52606a]">Mostly cloudy</p>
        </div>
      </div>
      <div className="flex items-center pl-[11px]">
        <button aria-label="Start">
          <WinLogo />
        </button>
        <button className="ml-[18px] flex h-[38px] w-[123px] items-center gap-1.5 rounded-full bg-[#f0f8fa] pl-7 text-sm shadow-[0_1px_1px_#b4ccd4]">
          <Line d="M10 2.500 A7 7 0 1 0 10 16.500 A7 7 0 1 0 10 2.500 M15 15 L22 22" size={18} w={2.2} />
          Search
        </button>
        <div className="ml-[18px] flex gap-[25px]">
          {APPS.map(([name, Icon]) => (
            <button key={name} aria-label={name}>
              <Icon />
            </button>
          ))}
          <button aria-label="Dropbox" className="text-black">
            <FaDropbox size={30} />
          </button>
        </div>
        <button aria-label="Chrome" className="relative ml-4 flex h-12 w-12 items-center justify-center rounded-md border border-[#dbeaf0] bg-[#e6f2f6]">
          <Chrome />
          <span className="absolute top-0.5 right-0.5">
            <Avatar size={20} />
          </span>
          <span className="absolute bottom-0 h-1 w-5 rounded-full bg-[#22808f]" />
        </button>
        <button aria-label="Chrome, second profile" className="relative ml-[7px] flex h-12 w-12 items-center justify-center">
          <Chrome />
          <span className="absolute top-0.5 right-0.5 flex size-5 items-center justify-center rounded-full bg-[#7b1fa2] text-xs text-white">j</span>
          <span className="absolute bottom-0 h-1 w-2 rounded-full bg-[#7d8c92]" />
        </button>
      </div>
      <div className="flex items-center justify-end pr-[19px] text-sm leading-5">
        <button aria-label="Hidden icons">
          <Line d="M4 16 L12 8 L20 16" size={22} w={1.7} />
        </button>
        <svg width="22" height="16" viewBox="0 0 22 16" className="ml-2" aria-hidden="true">
          <path d="M5 14.500 A4.300 4.300 0 0 1 4.500 6 A6 6 0 0 1 15.500 5 A4.800 4.800 0 0 1 17.500 14.500 Z" fill="#8a8a8a" stroke="#222" strokeWidth="1.200" />
          <path d="M5 13.900 Q2 13.500 2 11 L11 7.500 L19.800 12 Q19 14 17 13.900 Z" fill="#e3e1e3" />
        </svg>
        <svg width="22" height="22" viewBox="0 0 22 22" className="ml-2" aria-hidden="true">
          <path d="M1.500 12 A9.500 9.500 0 0 1 19 6.500 M19.500 1.500 V7 H14 M2.500 20.500 V15 H8 M2.500 15.500 Q5 20 10 20.500" fill="none" stroke="#1b1b1b" strokeWidth="1.300" />
          <circle cx="16" cy="16" r="5" fill="#ff9800" />
        </svg>
        <p className="ml-[18px] pb-px text-center">
          ENG
          <br />
          IN
        </p>
        <svg width="21" height="16" viewBox="0 0 21 16" className="ml-[22px]" fill="none" stroke="#1b1b1b" strokeWidth="1.400" aria-hidden="true">
          <path d="M0.800 6 Q10.500 -3.500 20.200 6 M3.500 9 Q10.500 2 17.500 9 M6.300 11.700 Q10.500 7.400 14.700 11.700" />
          <circle cx="10.500" cy="14" r="1.300" fill="#1b1b1b" stroke="none" />
        </svg>
        <svg width="20" height="16" viewBox="0 0 20 16" className="ml-2.5" fill="none" stroke="#1b1b1b" strokeWidth="1.300" aria-hidden="true">
          <path d="M1 5 H4.500 L9 1 V15 L4.500 11 H1 Z M12.500 5 L18.500 11 M18.500 5 L12.500 11" />
        </svg>
        <svg width="21" height="13" viewBox="0 0 21 13" className="ml-2.5" aria-hidden="true">
          <rect x="0.800" y="0.800" width="17" height="11.400" rx="2.500" fill="none" stroke="#1b1b1b" strokeWidth="1.400" />
          <rect x="3" y="3" width="4.500" height="7" rx="0.800" fill="#1b1b1b" />
          <path d="M18.500 4 Q20.500 4.500 20.500 6.500 Q20.500 8.500 18.500 9 Z" fill="#1b1b1b" />
        </svg>
        <p className="ml-4 pb-px text-right">
          01:10
          <br />
          17-11-2024
        </p>
      </div>
    </footer>
  );
}

export default function App() {
  return (
    <div className={`flex h-screen flex-col overflow-hidden bg-white ${font}`}>
      <BrowserBar />
      <BuilderHeader />
      <Toolbar />
      <main className="grid min-h-0 flex-1 grid-cols-[1034fr_886fr] grid-rows-1">
        <Canvas />
        <Panel />
      </main>
      <Taskbar />
    </div>
  );
}
